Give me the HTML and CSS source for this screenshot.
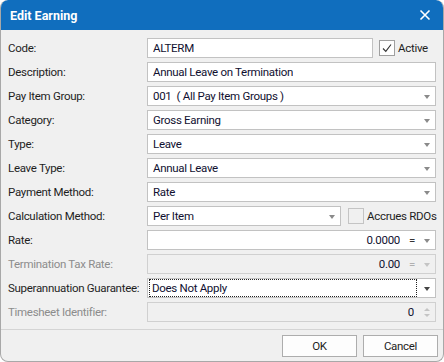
FILE: index.html
```html
<!DOCTYPE html>
<html>
<head>
<meta charset="utf-8">
<link rel="stylesheet" href="styles.css">
</head>
<body>
<div class="window">
  <div class="titlebar">
    <span class="title">Edit Earning</span>
    <svg class="close" width="12" height="12" viewBox="0 0 12 12"><path d="M1.5 1.5 L10.5 10.5 M10.5 1.5 L1.5 10.5" stroke="#fff" stroke-width="1.6" fill="none"/></svg>
  </div>
  <div class="form">
    <label class="lbl">Code:</label>
    <div class="line">
      <div class="field grow"><span class="val">ALTERM</span></div>
      <div class="check"><span class="box"><svg width="12" height="12" viewBox="0 0 12 12"><path d="M2 6.5 L4.8 9.3 L10 2.5" stroke="#333" stroke-width="1.1" fill="none"/></svg></span><span>Active</span></div>
    </div>

    <label class="lbl">Description:</label>
    <div class="field"><span class="val">Annual Leave on Termination</span></div>

    <label class="lbl">Pay Item Group:</label>
    <div class="field combo"><span class="val">001&nbsp; ( All Pay Item Groups )</span><span class="arrow"></span></div>

    <label class="lbl">Category:</label>
    <div class="field combo"><span class="val">Gross Earning</span><span class="arrow"></span></div>

    <label class="lbl">Type:</label>
    <div class="field combo"><span class="val">Leave</span><span class="arrow"></span></div>

    <label class="lbl">Leave Type:</label>
    <div class="field combo"><span class="val">Annual Leave</span><span class="arrow"></span></div>

    <label class="lbl">Payment Method:</label>
    <div class="field combo"><span class="val">Rate</span><span class="arrow"></span></div>

    <label class="lbl">Calculation Method:</label>
    <div class="line">
      <div class="field combo grow"><span class="val">Per Item</span><span class="arrow"></span></div>
      <div class="check rdo"><span class="box"></span><span>Accrues RDOs</span></div>
    </div>

    <label class="lbl">Rate:</label>
    <div class="field combo num"><span class="val">0.0000</span><span class="eq">=</span><span class="arrow"></span></div>

    <label class="lbl dis">Termination Tax Rate:</label>
    <div class="field combo num disabled"><span class="val">0.00</span><span class="eq">=</span><span class="arrow"></span></div>

    <label class="lbl">Superannuation Guarantee:</label>
    <div class="field combo focus"><span class="val focusrect">Does Not Apply</span><span class="arrow dark"></span></div>

    <label class="lbl dis">Timesheet Identifier:</label>
    <div class="field num disabled spin"><span class="val">0</span><span class="spinner"><span class="up"></span><span class="down"></span></span></div>
  </div>
  <div class="footer">
    <button class="btn">OK</button>
    <button class="btn">Cancel</button>
  </div>
</div>
</body>
</html>
```
FILE: styles.css
```css
html, body {
  margin: 0;
  padding: 0;
  background: #ffffff;
}
body {
  font-family: Roboto, "Liberation Sans", sans-serif;
  font-size: 11.5px;
  letter-spacing: -0.3px;
  color: #1e1e1e;
}
.window {
  width: 444px;
  height: 362px;
  box-sizing: border-box;
  background: #f0f0f0;
  border: 1px solid #a8a8a8;
  border-top: none;
  border-radius: 8px;
  overflow: hidden;
  display: flex;
  flex-direction: column;
}
.titlebar {
  height: 30px;
  flex-shrink: 0;
  background: #106ebe;
  margin: 0 -1px;
  display: flex;
  align-items: center;
  justify-content: space-between;
  padding: 0 13px 0 10px;
  border-radius: 8px 8px 0 0;
}
.title {
  color: #fff;
  font-weight: bold;
  font-size: 12.5px;
  letter-spacing: 0;
}
.close {
  display: block;
}
.form {
  display: grid;
  grid-template-columns: 139px 1fr;
  grid-auto-rows: 20px;
  row-gap: 4px;
  padding: 8px 7px 0 7px;
  align-items: center;
}
.lbl {
  line-height: 20px;
  white-space: nowrap;
  color: #1e1e1e;
}
.lbl.dis {
  color: #8c8c8c;
}
.line {
  display: flex;
  align-items: center;
}
.grow {
  flex: 1;
}
.field {
  height: 20px;
  box-sizing: border-box;
  border: 1px solid #c2c2c2;
  background: #fff;
  display: flex;
  align-items: center;
  padding-left: 5px;
  color: #101030;
}
.val {
  white-space: nowrap;
  overflow: hidden;
  line-height: 16px;
}
.combo .val {
  flex: 1;
}
.arrow {
  flex-shrink: 0;
  width: 0;
  height: 0;
  border-left: 3.5px solid transparent;
  border-right: 3.5px solid transparent;
  border-top: 4px solid #8a8a8a;
  margin: 1px 5px 0 8px;
}
.arrow.dark {
  border-top-color: #444;
}
.num .val {
  text-align: right;
  flex: 1;
}
.eq {
  margin-left: 8px;
  color: #333;
  width: 8px;
  text-align: center;
}
.disabled {
  background: #f0f0f0;
  border-color: #d0d0d0;
}
.disabled .eq {
  color: #b0b0b0;
}
.disabled .arrow {
  border-top-color: #c4c4c4;
}
.focus .val.focusrect {
  outline: 1px dotted #222;
  outline-offset: 0;
  margin-left: -3px;
  padding-left: 2px;
  height: 16px;
}
.spin .val {
  margin-right: 8px;
}
.spinner {
  display: flex;
  flex-direction: column;
  gap: 3px;
  margin-right: 5px;
  margin-left: 2px;
}
.spinner .up {
  width: 0;
  height: 0;
  border-left: 3.5px solid transparent;
  border-right: 3.5px solid transparent;
  border-bottom: 3px solid #c4c4c4;
}
.spinner .down {
  width: 0;
  height: 0;
  border-left: 3.5px solid transparent;
  border-right: 3.5px solid transparent;
  border-top: 3px solid #c4c4c4;
}
.check {
  flex-shrink: 0;
  display: flex;
  align-items: center;
  margin-left: 6px;
  width: 57px;
  white-space: nowrap;
}
.check.rdo {
  margin-left: 7px;
  width: 88px;
}
.box {
  flex-shrink: 0;
  width: 16px;
  height: 16px;
  box-sizing: border-box;
  border: 1px solid #a0a0a0;
  background: #fff;
  display: flex;
  align-items: center;
  justify-content: center;
  margin-right: 3px;
}
.rdo .box {
  background: #f0f0f0;
  border-color: #c4c4c4;
}
.footer {
  margin-top: auto;
  border-top: 1px solid #d4d4d4;
  display: flex;
  justify-content: flex-end;
  gap: 6px;
  padding: 5px 5px 4px 0;
}
.btn {
  width: 75px;
  height: 22px;
  box-sizing: border-box;
  border: 1px solid #adadad;
  background: #fdfdfd;
  font-family: Roboto, "Liberation Sans", sans-serif;
  font-size: 11.5px;
  letter-spacing: -0.3px;
  color: #1e1e1e;
  padding: 0;
}
```
